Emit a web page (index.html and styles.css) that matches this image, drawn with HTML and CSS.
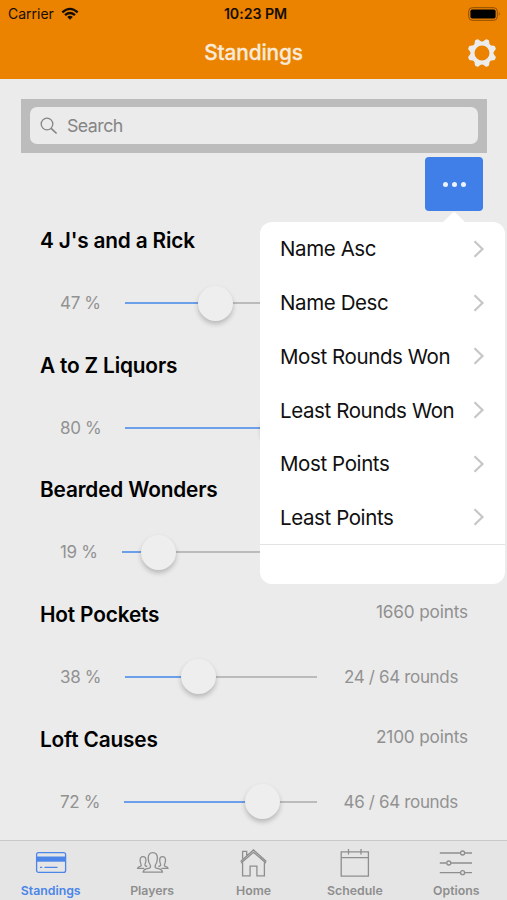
FILE: index.html
```html
<!DOCTYPE html>
<html lang="en">
<head>
<meta charset="utf-8">
<title>Standings</title>
<link rel="stylesheet" href="styles.css">
</head>
<body>
<div class="app">
  <header class="header">
    <div class="status">
      <div class="carrier"><span>Carrier</span>
        <svg width="18" height="14" viewBox="0 0 18 14" fill="none" stroke="#160d00" stroke-width="2.3"><path d="M1.3 5.3Q9-1.6 16.7 5.3M4 8.2Q9 3.9 14 8.2"/><path d="M9 12.8L6.2 10Q9 7.6 11.8 10Z" fill="#160d00" stroke="none"/></svg>
      </div>
      <div class="clock">10:23 PM</div>
      <svg class="battery" width="33" height="14" viewBox="0 0 33 14"><rect x=".7" y=".7" width="28.6" height="12.6" rx="3.6" fill="none" stroke="#8b4e00"/><rect x="2.4" y="2.4" width="25.2" height="9.2" rx="1.8" fill="#000"/><path d="M30.8 4.5q1.8 2.3 0 4.6z" fill="#8b4e00"/></svg>
    </div>
    <div class="navbar">
      <h1 class="title">Standings</h1>
      <svg class="gear" width="30" height="30" viewBox="-15 -15 30 30">
        <defs><path id="tooth" d="M-4.6-9.2L-2.1-13.6Q-1.7-14.5-.8-14.5H.8Q1.7-14.5 2.1-13.6L4.6-9.2Z"/></defs>
        <circle r="9.5" fill="none" stroke="#ececec" stroke-width="4"/>
        <g fill="#ececec">
          <use href="#tooth" transform="rotate(22.5)"/><use href="#tooth" transform="rotate(67.5)"/><use href="#tooth" transform="rotate(112.5)"/><use href="#tooth" transform="rotate(157.5)"/>
          <use href="#tooth" transform="rotate(202.5)"/><use href="#tooth" transform="rotate(247.5)"/><use href="#tooth" transform="rotate(292.5)"/><use href="#tooth" transform="rotate(337.5)"/>
        </g>
      </svg>
    </div>
  </header>

  <main class="content">
    <div class="searchbar">
      <div class="search">
        <svg width="18" height="18" viewBox="0 0 18 18" fill="none" stroke="#858585" stroke-width="1.3"><circle cx="7" cy="7" r="5.8"/><path d="M11.1 11.3L16.6 16.5" stroke-width="1.7"/></svg>
        <span>Search</span>
      </div>
    </div>
    <div class="toolbar">
      <button class="more" aria-label="Sort"><i></i><i></i><i></i></button>
      <nav class="popover">
        <a class="option">Name Asc<svg class="chev" viewBox="0 0 12 18"><path d="M1.5 1.2L9.5 9L1.5 16.8"/></svg></a>
        <a class="option">Name Desc<svg class="chev" viewBox="0 0 12 18"><path d="M1.5 1.2L9.5 9L1.5 16.8"/></svg></a>
        <a class="option">Most Rounds Won<svg class="chev" viewBox="0 0 12 18"><path d="M1.5 1.2L9.5 9L1.5 16.8"/></svg></a>
        <a class="option">Least Rounds Won<svg class="chev" viewBox="0 0 12 18"><path d="M1.5 1.2L9.5 9L1.5 16.8"/></svg></a>
        <a class="option">Most Points<svg class="chev" viewBox="0 0 12 18"><path d="M1.5 1.2L9.5 9L1.5 16.8"/></svg></a>
        <a class="option">Least Points<svg class="chev" viewBox="0 0 12 18"><path d="M1.5 1.2L9.5 9L1.5 16.8"/></svg></a>
      </nav>
    </div>
    <section class="team">
      <div class="team-head"><h2>4 J's and a Rick</h2></div>
      <div class="range"><span>47 %</span><div class="track" style="--value:47%"><div class="fill"></div><div class="knob"></div></div><span class="rounds"></span></div>
    </section>
    <section class="team">
      <div class="team-head"><h2>A to Z Liquors</h2></div>
      <div class="range"><span>80 %</span><div class="track" style="--value:80%"><div class="fill"></div><div class="knob"></div></div><span class="rounds"></span></div>
    </section>
    <section class="team">
      <div class="team-head"><h2>Bearded Wonders</h2></div>
      <div class="range"><span>19 %</span><div class="track" style="--value:19%"><div class="fill"></div><div class="knob"></div></div><span class="rounds"></span></div>
    </section>
    <section class="team">
      <div class="team-head"><h2>Hot Pockets</h2><span class="points">1660 points</span></div>
      <div class="range"><span>38 %</span><div class="track" style="--value:38%"><div class="fill"></div><div class="knob"></div></div><span class="rounds">24 / 64 rounds</span></div>
    </section>
    <section class="team">
      <div class="team-head"><h2>Loft Causes</h2><span class="points">2100 points</span></div>
      <div class="range"><span>72 %</span><div class="track" style="--value:72%"><div class="fill"></div><div class="knob"></div></div><span class="rounds">46 / 64 rounds</span></div>
    </section>
  </main>

  <footer class="tabs">
    <a class="tab active">
      <svg width="34" height="30" viewBox="0 0 34 30"><rect x="2.6" y="4.6" width="29" height="19.8" rx="2" fill="none" stroke="currentColor" stroke-width="1.3"/><path d="M2.6 8.5h29v5.2h-29z" fill="currentColor"/><path d="M6 19.3h2.2M10.5 19.3h13" stroke="currentColor" stroke-width="1.3" fill="none"/></svg>
      <span>Standings</span>
    </a>
    <a class="tab">
      <svg width="34" height="30" viewBox="0 0 34 30" fill="none" stroke="currentColor" stroke-width="1.3"><path d="M8.2 24.2H27.4Q27.2 21.6 24.4 20.9L21.2 20.1Q19.5 19.3 20.4 17Q22.4 14 22.4 10.2Q22.4 4.7 17.8 4.7Q13.2 4.7 13.2 10.2Q13.2 14 15.2 17Q16.1 19.3 14.4 20.1L11.2 20.9Q8.4 21.6 8.2 24.2Z"/><path d="M9.2 20.3H2.6Q2.8 18.9 5.2 18.3Q6.8 17.7 6 16.2Q5.1 14.4 5.1 12.2Q5.1 8.7 8 8.7Q10.9 8.7 10.9 12.2Q10.9 14.4 10 16.2Q9.2 17.7 12.2 18.5M26.4 20.3H33Q32.8 18.9 30.4 18.3Q28.8 17.7 29.6 16.2Q30.5 14.4 30.5 12.2Q30.5 8.7 27.6 8.7Q24.7 8.7 24.7 12.2Q24.7 14.4 25.6 16.2Q26.4 17.7 23.4 18.5"/></svg>
      <span>Players</span>
    </a>
    <a class="tab">
      <svg width="34" height="30" viewBox="0 0 34 30" fill="none" stroke="currentColor" stroke-width="1.3"><path d="M4.6 13.4L17.5 1.9L30.4 13.4M5.1 15.1L17.5 4.3L29.9 15.1M6.6 10.8V3.4H10.7V7.2M6.6 13.8V27.9H14.1V18.2H20.9V27.9H28.4V13.8"/></svg>
      <span>Home</span>
    </a>
    <a class="tab">
      <svg width="34" height="30" viewBox="0 0 34 30" fill="none" stroke="currentColor" stroke-width="1.3"><path d="M3.2 3.8H30.4V28.2H3.2ZM3.2 9.7H30.4M10.5 1V6.5M23 1V6.5"/></svg>
      <span>Schedule</span>
    </a>
    <a class="tab">
      <svg width="34" height="30" viewBox="0 0 34 30" fill="none" stroke="currentColor" stroke-width="1.3"><path d="M.8 5H21.4M25.8 5H33M.8 15H7.6M12 15H33M.8 24.7H21.4M25.8 24.7H33"/><circle cx="23.6" cy="5" r="2"/><circle cx="9.8" cy="15" r="2"/><circle cx="23.6" cy="24.7" r="2"/></svg>
      <span>Options</span>
    </a>
  </footer>
</div>
</body>
</html>
```

FILE: styles.css
```css
* { box-sizing: border-box; }
body { margin: 0; font-family: Inter, "Liberation Sans", sans-serif; color: #000; background: #ebebeb; }
.app { width: 507px; height: 900px; display: flex; flex-direction: column; overflow: hidden; }
.header { height: 79px; flex: none; background: #eb8200; }
.status { height: 27px; padding: 0 6px 0 8px; display: grid; grid-template-columns: 1fr auto 1fr; align-items: center; font-size: 14px; color: #160d00; }
.carrier { display: flex; align-items: center; gap: 7px; }
.clock { font-weight: 600; font-size: 14.2px; letter-spacing: -0.05px; padding-left: 2px; }
.battery { justify-self: end; }
.navbar { height: 52px; padding: 0 10px 0 40px; display: flex; align-items: center; }
.title { flex: 1; margin: -2px 0 0; text-align: center; font-size: 20.8px; font-weight: 500; -webkit-text-stroke: .3px #f8ead8; letter-spacing: -0.1px; color: #f8ead8; }
.gear { display: block; }
.content { flex: 1; min-height: 0; padding-top: 20px; overflow: hidden; }
.searchbar { margin: 0 20px 0 21px; height: 54px; padding: 8px 9px; background: #bcbcbc; }
.search { height: 37px; border-radius: 7px; background: #ebebeb; padding-left: 10px; display: flex; align-items: center; gap: 9px; font-size: 17.8px; letter-spacing: -0.55px; color: #858585; }
.toolbar { position: relative; height: 62px; padding: 4px 24px 0 0; display: flex; justify-content: flex-end; }
.more { width: 58px; height: 54px; border: 0; padding: 0; border-radius: 4px; background: #407fe8; display: flex; align-items: center; justify-content: center; gap: 4px; }
.more i { width: 5px; height: 5px; border-radius: 50%; background: #edf3ff; }
.popover { position: absolute; z-index: 3; top: 69px; left: 260px; width: 244.5px; height: 362px; border-radius: 12px; background: #fff; }
.popover::before { content: ""; position: absolute; top: -10px; left: 182px; width: 24px; height: 11px; background: #fff; clip-path: polygon(0 100%, 43% 8%, 50% 0, 57% 8%, 100% 100%); }
.option { height: 53.75px; padding: 0 20px; display: flex; align-items: center; justify-content: space-between; font-size: 20.5px; letter-spacing: -0.4px; color: #101010; }
.option:last-child { border-bottom: 1px solid #e3e3e3; }
.chev { width: 12px; height: 18px; fill: none; stroke: #c6c6c9; stroke-width: 2.2; }
.team { height: 124.65px; padding-left: 40px; }
.team-head { height: 51px; padding-right: 39px; display: flex; align-items: center; justify-content: space-between; }
.team h2 { margin: 0; font-size: 20.8px; font-weight: 600; letter-spacing: -0.16px; }
.points { font-size: 17.2px; letter-spacing: -0.15px; color: #909090; margin-top: -5px; }
.range { height: 74px; padding: 0 49px 0 20px; display: flex; align-items: center; font-size: 17px; letter-spacing: -0.35px; color: #929292; }
.track { flex: 1; position: relative; height: 2px; margin: 0 25px 0 24px; background: #bbb; }
.fill { width: var(--value); height: 2px; background: #6c9ee9; }
.knob { position: absolute; top: -16.5px; left: calc(var(--value) - 17.5px); width: 35px; height: 35px; border-radius: 50%; background: #eee; box-shadow: 0 3px 5px rgba(0,0,0,.22); }
.rounds { min-width: 116px; text-align: right; }
.tabs { position: relative; z-index: 2; flex: none; height: 60px; border-top: 1px solid #cacaca; background: #e5e5e5; display: grid; grid-template-columns: repeat(5, 1fr); }
.tab { padding-top: 7px; display: flex; flex-direction: column; align-items: center; color: #8e8e8e; font-size: 12.3px; font-weight: 600; line-height: 16px; gap: 5px; }
.tab svg { display: block; }
.tab.active { color: #4b86e8; }
```
